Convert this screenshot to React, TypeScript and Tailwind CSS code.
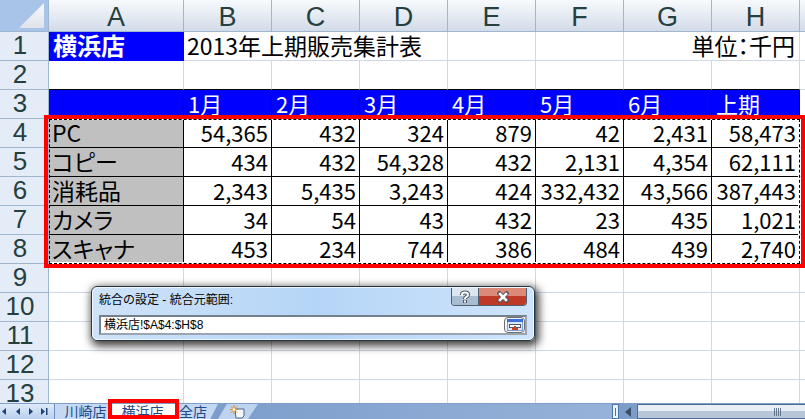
import * as React from "react";

const columns = ["A", "B", "C", "D", "E", "F", "G", "H"];
const months = ["1月", "2月", "3月", "4月", "5月", "6月", "上期"];

const sales = [
  { name: "PC", values: ["54,365", "432", "324", "879", "42", "2,431", "58,473"] },
  { name: "コピー", values: ["434", "432", "54,328", "432", "2,131", "4,354", "62,111"] },
  { name: "消耗品", values: ["2,343", "5,435", "3,243", "424", "332,432", "43,566", "387,443"] },
  { name: "カメラ", values: ["34", "54", "43", "432", "23", "435", "1,021"] },
  { name: "スキャナ", values: ["453", "234", "744", "386", "484", "439", "2,740"] },
];

const emptyRows = [9, 10, 11, 12, 13];

const grid = "border-r border-b border-[#d0d7e5]";

function RowNumber({ n }: { n: number }) {
  return (
    <th
      scope="row"
      className="border-r border-b border-[#9eb6ce] bg-[#e4ecf7] p-0 pr-2 pb-0.5 text-center font-['Liberation_Sans',sans-serif] text-[26px] leading-[26px] font-normal text-[#263f3f]"
    >
      {n}
    </th>
  );
}

function Sheet() {
  return (
    <table className="w-full min-w-[805px] table-fixed border-separate border-spacing-0 whitespace-nowrap">
      <colgroup>
        <col className="w-[49px]" />
        <col className="w-[135px]" />
        {months.map((m) => (
          <col key={m} className="w-[88px]" />
        ))}
        <col />
      </colgroup>
      <thead>
        <tr className="h-8">
          <th className="border-r border-b border-[#9eb6ce] bg-[#a9c4e9] p-0 align-top">
            <svg className="mt-0.5 ml-[18px] block h-[27px] w-[27px]" viewBox="0 0 27 27" aria-hidden="true">
              <defs>
                <linearGradient id="corner" x1="0" y1="0" x2="0" y2="1">
                  <stop offset="0" stopColor="#f8f9fb" />
                  <stop offset="1" stopColor="#dfe3ea" />
                </linearGradient>
              </defs>
              <path d="M26 1V26H1Z" fill="url(#corner)" />
            </svg>
          </th>
          {columns.map((c) => (
            <th
              key={c}
              scope="col"
              className="border-r border-b border-[#9eb6ce] bg-linear-to-b from-[#f7fafc] to-[#d3dbe9] p-0 pt-1 font-['Liberation_Sans',sans-serif] text-[27px] leading-[27px] font-normal text-[#263f3f]"
            >
              {c}
            </th>
          ))}
          <th className="border-b border-[#9eb6ce] bg-linear-to-b from-[#f7fafc] to-[#d3dbe9] p-0" />
        </tr>
      </thead>
      <tbody>
        <tr className="h-[29px]">
          <RowNumber n={1} />
          <td className="border-r border-b border-[#0000ff] bg-[#0000ff] p-0 pb-0.5 pl-1 text-2xl leading-[26px] font-bold text-white">
            横浜店
          </td>
          <td colSpan={3} className={`${grid} p-0 pb-0.5 pl-[3px] text-[23px] leading-[26px]`}>
            2013年上期販売集計表
          </td>
          <td className={grid} />
          <td className={grid} />
          <td colSpan={2} className={`${grid} p-0 pr-1 pb-0.5 text-right text-[23px] leading-[26px]`}>
            単位<span className="[font-feature-settings:'halt']">：</span>千円
          </td>
          <td className="border-b border-[#d0d7e5]" />
        </tr>
        <tr className="h-[29px]">
          <RowNumber n={2} />
          {columns.map((c) => (
            <td key={c} className="border-r border-b border-r-[#d0d7e5] border-b-black" />
          ))}
          <td className="border-b border-[#d0d7e5]" />
        </tr>
        <tr className="h-[29px]">
          <RowNumber n={3} />
          <td className="border-r border-b border-black bg-[#0000ff]" />
          {months.map((m) => (
            <th
              key={m}
              scope="col"
              className="border-r border-b border-black bg-[#0000ff] p-0 pb-0.5 pl-1 text-left text-[22px] leading-[26px] font-normal text-white"
            >
              {m}
            </th>
          ))}
          <td className="border-b border-[#d0d7e5]" />
        </tr>
        {sales.map((row, i) => (
          <tr key={row.name} className="h-[29px]">
            <RowNumber n={i + 4} />
            <td className="border-r border-b border-black bg-[#c0c0c0] p-0 pb-0.5 pl-[3px] text-[23px] leading-[26px] [font-feature-settings:'palt']">
              {row.name}
            </td>
            {row.values.map((v, j) => (
              <td key={j} className="border-r border-b border-black p-0 pr-[3px] pb-0.5 text-right text-[22px] leading-[26px]">
                {v}
              </td>
            ))}
            <td className="border-b border-[#d0d7e5]" />
          </tr>
        ))}
        {emptyRows.map((n) => (
          <tr key={n} className="h-[29px]">
            <RowNumber n={n} />
            {columns.map((c) => (
              <td key={c} className={grid} />
            ))}
            <td className="border-b border-[#d0d7e5]" />
          </tr>
        ))}
      </tbody>
    </table>
  );
}

function RangeDialog() {
  const [range, setRange] = React.useState("横浜店!$A$4:$H$8");

  return (
    <div
      role="dialog"
      aria-labelledby="range-title"
      className="absolute top-[286px] left-[91px] w-[444px] rounded-md border border-[#27363d] bg-linear-to-r from-[#cfe3f8] via-[#b5d5f7] to-[#cfe4fb] font-['Liberation_Sans','Noto_Sans_CJK_JP',sans-serif] shadow-[2px_3px_9px_2px_rgba(0,0,0,0.75)]"
    >
      <div className="rounded-md border border-white/70 px-1.5 pb-1">
        <div className="flex h-[27px] items-start justify-between">
          <label id="range-title" htmlFor="range" className="pt-0.5 text-xs leading-5 text-black">
            統合の設定 - 統合元範囲:
          </label>
          <div className="flex overflow-hidden rounded-b border border-t-0 border-[#4f5f70]">
            <button
              aria-label="ヘルプ"
              className="flex h-[17px] w-[27px] items-center justify-center border-r border-[#4f5f70] bg-linear-to-b from-[#dbe6f1] from-50% to-[#a9bdd1] to-50%"
            >
              <svg className="h-3.5 w-3" viewBox="0 0 12 14" fill="none" aria-hidden="true">
                <path d="M3 5V4.5Q3 2.5 6 2.5T9 4.7Q9 6 7.4 6.8Q6 7.5 6 9M6 10V13" stroke="#4b5661" strokeWidth="4" />
                <path d="M3 5V4.5Q3 2.5 6 2.5T9 4.7Q9 6 7.4 6.8Q6 7.5 6 9M6 10.5V12.5" stroke="#fff" strokeWidth="2" />
              </svg>
            </button>
            <button
              aria-label="閉じる"
              className="flex h-[17px] w-[47px] items-center justify-center bg-linear-to-b from-[#dc8a78] from-50% to-[#bf3a26] to-50%"
            >
              <svg className="h-3 w-3" viewBox="0 0 12 12" fill="none" aria-hidden="true">
                <path d="M2.5 2.5L9.5 9.5M9.5 2.5L2.5 9.5" stroke="#53525c" strokeWidth="4.4" strokeLinecap="square" />
                <path d="M3 3L9 9M9 3L3 9" stroke="#fff" strokeWidth="2.6" strokeLinecap="square" />
              </svg>
            </button>
          </div>
        </div>
        <div className="flex h-5 items-center border-2 border-[#75808d] border-r-[#9aa5b1] border-b-[#9aa5b1] bg-white">
          <input
            id="range"
            value={range}
            onChange={(e) => setRange(e.target.value)}
            className="min-w-0 flex-1 pl-[3px] text-xs leading-4 text-black outline-none"
          />
          <button
            aria-label="ダイアログを元に戻す"
            className="flex h-4 w-[21px] items-center justify-center rounded-sm border border-[#707070] bg-[#f2f2f2]"
          >
            <svg className="h-3 w-4" viewBox="0 0 16 12" aria-hidden="true">
              <rect x="0.5" y="0.5" width="15" height="11" fill="#dbe7fb" stroke="#7e9fd8" />
              <rect x="0" y="0" width="16" height="3" fill="#3b6fdc" />
              <rect x="2.5" y="5.5" width="11" height="3" fill="#fff" stroke="#4d5a6e" />
              <path d="M7 7H9V9H11V11H5V9H7Z" fill="#d0401c" />
            </svg>
          </button>
        </div>
      </div>
    </div>
  );
}

const navButtons = [
  { label: "先頭のシート", d: "M6 1L2 4.5L6 8Z" },
  { label: "前のシート", d: "M6 1L2 4.5L6 8Z" },
  { label: "次のシート", d: "M2 1L6 4.5L2 8Z" },
  { label: "最後のシート", d: "M0 1L4 4.5L0 8ZM5 1H6.5V8H5Z" },
];

function BottomBar() {
  return (
    <div className="relative flex h-4 shrink-0 border-t border-[#7d9cc6] bg-linear-to-r from-[#6f93c4] to-[#a3bce0] font-['Liberation_Sans','Noto_Sans_CJK_JP',sans-serif]">
      <div className="flex w-[54px] items-center justify-between bg-linear-to-b from-[#dfeafa] to-[#b9d0ee] pr-1.5">
        {navButtons.map((b) => (
          <button key={b.label} aria-label={b.label} className="flex">
            <svg className="h-[9px] w-[7px]" viewBox="0 0 7 9" fill="#1f4377" aria-hidden="true">
              <path d={b.d} />
            </svg>
          </button>
        ))}
      </div>
      <div role="tablist" className="flex text-sm leading-[14px] text-[#1e4a87]">
        <button role="tab" aria-selected="false" className="w-[58px] border-l border-[#6d8fbf] bg-[#c4d8f2] pl-1">
          川崎店
        </button>
        <button role="tab" aria-selected="true" className="w-[63px] bg-white pr-0.5">
          横浜店
        </button>
        <button
          role="tab"
          aria-selected="false"
          className="w-[43px] bg-[#c4d8f2] pl-1 text-left [clip-path:polygon(0_0,100%_0,82%_100%,0_100%)]"
        >
          全店
        </button>
        <button
          aria-label="ワークシートの挿入"
          className="flex w-[40px] items-center justify-center bg-[#bdd3ef] [clip-path:polygon(22%_0,100%_0,75%_100%,0_100%)]"
        >
          <svg className="h-3.5 w-4" viewBox="0 0 16 14" aria-hidden="true">
            <path d="M5 4H14V11L12 13H6Z" fill="#f4f8fd" stroke="#49678f" />
            <path d="M4 0V9M0 4.5H8M1 1.5L7 7.5M7 1.5L1 7.5" stroke="#d98a1c" />
            <circle cx="4" cy="4.5" r="1.6" fill="#fff2b0" />
          </svg>
        </button>
      </div>
      <div className="ml-auto flex w-[193px]">
        <div className="flex w-[7px] items-center justify-center border border-[#4c74a8] bg-[#eaf2fc]">
          <span className="h-2 w-px bg-[#4c74a8]" />
        </div>
        <button aria-label="左へスクロール" className="flex w-[18px] items-center justify-center bg-[#7c9dca]">
          <svg className="h-2.5 w-1.5" viewBox="0 0 6 10" aria-hidden="true">
            <path d="M6 0V10L0 5Z" fill="#3c4e69" />
          </svg>
        </button>
        <div className="flex flex-1 items-center border border-r-0 border-[#4d6c97] bg-linear-to-b from-[#e9eef4] from-50% to-[#b7c6d9] to-50% pl-[136px]">
          <svg className="h-2 w-2" viewBox="0 0 8 8" aria-hidden="true">
            <path d="M0.5 0V8M2.5 0V8M4.5 0V8M6.5 0V8" stroke="#66788f" />
          </svg>
        </div>
      </div>
      {/* highlight around the active tab */}
      <div className="pointer-events-none absolute -top-[5px] bottom-0 left-[108px] w-[71px] border-4 border-[#ff0000]" />
    </div>
  );
}

export default function App() {
  return (
    <div
      lang="ja"
      className="flex h-screen flex-col overflow-hidden bg-white font-['Noto_Sans_CJK_JP','Liberation_Sans',sans-serif] text-black"
    >
      <div className="relative min-h-0 flex-1 overflow-hidden">
        <Sheet />
        {/* copied range A4:H8, dashed black on white */}
        <div className="pointer-events-none absolute top-[115px] left-[44px] h-[153px] w-[761px] border-4 border-[#ff0000]">
          <div className="absolute inset-x-px inset-y-0 border-t border-r-2 border-b-2 border-white" />
          <div className="absolute inset-x-px inset-y-0 border border-dashed border-black" />
        </div>
        <RangeDialog />
      </div>
      <BottomBar />
    </div>
  );
}
